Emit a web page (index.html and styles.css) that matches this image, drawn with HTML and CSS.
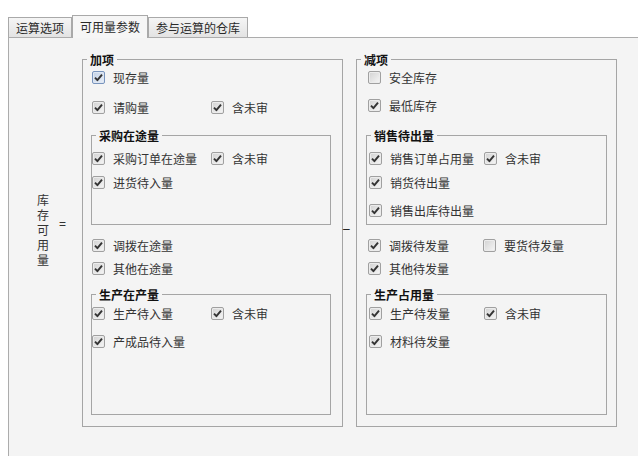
FILE: index.html
```html
<!DOCTYPE html>
<html lang="zh-CN">
<head>
<meta charset="utf-8">
<title>可用量参数</title>
<link rel="stylesheet" href="styles.css">
</head>
<body>
<div class="tabs">
  <div class="tab">运算选项</div>
  <div class="tab active">可用量参数</div>
  <div class="tab">参与运算的仓库</div>
</div>
<div class="panel">
  <div class="formula">
    <div class="vlabel">库存可用量</div>
    <div class="eq">=</div>

    <fieldset class="group add">
      <legend>加项</legend>
      <div class="row"><label class="item"><span class="cb focus"><svg viewBox="0 0 11 11"><path d="M2 5.6 L4.4 8.2 L9 2.6"/></svg></span>现存量</label></div>
      <div class="row mt10"><label class="item wl"><span class="cb"><svg viewBox="0 0 11 11"><path d="M2 5.6 L4.4 8.2 L9 2.6"/></svg></span>请购量</label><label class="item"><span class="cb"><svg viewBox="0 0 11 11"><path d="M2 5.6 L4.4 8.2 L9 2.6"/></svg></span>含未审</label></div>

      <fieldset class="sub sub1 mt11">
        <legend>采购在途量</legend>
        <div class="row mt5"><label class="item wl"><span class="cb"><svg viewBox="0 0 11 11"><path d="M2 5.6 L4.4 8.2 L9 2.6"/></svg></span>采购订单在途量</label><label class="item"><span class="cb"><svg viewBox="0 0 11 11"><path d="M2 5.6 L4.4 8.2 L9 2.6"/></svg></span>含未审</label></div>
        <div class="row mt4"><label class="item"><span class="cb"><svg viewBox="0 0 11 11"><path d="M2 5.6 L4.4 8.2 L9 2.6"/></svg></span>进货待入量</label></div>
      </fieldset>

      <div class="row mt10"><label class="item"><span class="cb"><svg viewBox="0 0 11 11"><path d="M2 5.6 L4.4 8.2 L9 2.6"/></svg></span>调拨在途量</label></div>
      <div class="row mt3"><label class="item"><span class="cb"><svg viewBox="0 0 11 11"><path d="M2 5.6 L4.4 8.2 L9 2.6"/></svg></span>其他在途量</label></div>

      <fieldset class="sub sub2 mt9">
        <legend>生产在产量</legend>
        <div class="row mt1"><label class="item wl"><span class="cb"><svg viewBox="0 0 11 11"><path d="M2 5.6 L4.4 8.2 L9 2.6"/></svg></span>生产待入量</label><label class="item"><span class="cb"><svg viewBox="0 0 11 11"><path d="M2 5.6 L4.4 8.2 L9 2.6"/></svg></span>含未审</label></div>
        <div class="row mt8"><label class="item"><span class="cb"><svg viewBox="0 0 11 11"><path d="M2 5.6 L4.4 8.2 L9 2.6"/></svg></span>产成品待入量</label></div>
      </fieldset>
    </fieldset>

    <div class="minus">–</div>

    <fieldset class="group sub-group">
      <legend>减项</legend>
      <div class="row"><label class="item"><span class="cb"></span>安全库存</label></div>
      <div class="row mt8"><label class="item"><span class="cb"><svg viewBox="0 0 11 11"><path d="M2 5.6 L4.4 8.2 L9 2.6"/></svg></span>最低库存</label></div>

      <fieldset class="sub sub1 mt13">
        <legend>销售待出量</legend>
        <div class="row mt5"><label class="item wr"><span class="cb"><svg viewBox="0 0 11 11"><path d="M2 5.6 L4.4 8.2 L9 2.6"/></svg></span>销售订单占用量</label><label class="item"><span class="cb"><svg viewBox="0 0 11 11"><path d="M2 5.6 L4.4 8.2 L9 2.6"/></svg></span>含未审</label></div>
        <div class="row mt4"><label class="item"><span class="cb"><svg viewBox="0 0 11 11"><path d="M2 5.6 L4.4 8.2 L9 2.6"/></svg></span>销货待出量</label></div>
        <div class="row mt8"><label class="item"><span class="cb"><svg viewBox="0 0 11 11"><path d="M2 5.6 L4.4 8.2 L9 2.6"/></svg></span>销售出库待出量</label></div>
      </fieldset>

      <div class="row mt10"><label class="item wr"><span class="cb"><svg viewBox="0 0 11 11"><path d="M2 5.6 L4.4 8.2 L9 2.6"/></svg></span>调拨待发量</label><label class="item"><span class="cb"></span>要货待发量</label></div>
      <div class="row mt3"><label class="item"><span class="cb"><svg viewBox="0 0 11 11"><path d="M2 5.6 L4.4 8.2 L9 2.6"/></svg></span>其他待发量</label></div>

      <fieldset class="sub sub2 mt9">
        <legend>生产占用量</legend>
        <div class="row mt1"><label class="item wr"><span class="cb"><svg viewBox="0 0 11 11"><path d="M2 5.6 L4.4 8.2 L9 2.6"/></svg></span>生产待发量</label><label class="item"><span class="cb"><svg viewBox="0 0 11 11"><path d="M2 5.6 L4.4 8.2 L9 2.6"/></svg></span>含未审</label></div>
        <div class="row mt8"><label class="item"><span class="cb"><svg viewBox="0 0 11 11"><path d="M2 5.6 L4.4 8.2 L9 2.6"/></svg></span>材料待发量</label></div>
      </fieldset>
    </fieldset>
  </div>
</div>
</body>
</html>
```

FILE: styles.css
```css
html, body {
  margin: 0;
  padding: 0;
  width: 638px;
  height: 456px;
  overflow: hidden;
  background: #ffffff;
}

body {
  font-family: "Noto Sans CJK SC", "Noto Sans", sans-serif;
  font-size: 12px;
  color: #333333;
}

/* ---------- tabs ---------- */
.tabs {
  display: flex;
  align-items: flex-end;
  margin-left: 8px;
  padding-top: 15px;
  height: 22px;
}

.tab {
  height: 19px;
  line-height: 19px;
  padding: 0 7px;
  border: 1px solid #a9a9a9;
  border-bottom: none;
  background: linear-gradient(#f5f5f5, #e3e3e3);
  color: #2a2a2a;
  white-space: nowrap;
}

.tab.active {
  height: 22px;
  line-height: 21px;
  margin-bottom: -1px;
  background: #f6f6f6;
  position: relative;
  z-index: 1;
}

/* ---------- panel ---------- */
.panel {
  margin-left: 8px;
  width: 629px;
  height: 404px;
  padding-top: 14px;
  border: 1px solid #acacac;
  border-right: none;
  border-bottom: none;
  background: #f4f4f4;
}

.formula {
  display: flex;
  align-items: flex-start;
}

.vlabel {
  width: 12px;
  margin-left: 28px;
  margin-top: 140px;
  line-height: 15px;
  word-break: break-all;
}

.eq {
  width: 7px;
  margin-left: 10px;
  margin-top: 165px;
  line-height: 15px;
  font-family: "Liberation Sans", sans-serif;
  font-size: 12px;
}

.minus {
  width: 13px;
  margin-top: 170px;
  line-height: 15px;
  font-family: "Liberation Sans", sans-serif;
  font-size: 12px;
  color: #111111;
}

/* ---------- group boxes ---------- */
fieldset {
  margin: 0;
  padding: 0;
  min-inline-size: 0;
  border: 1px solid #a5a5a5;
}

legend {
  margin-left: 4px;
  padding: 0 3px;
  line-height: 15px;
  font-weight: bold;
  color: #111111;
}

.group {
  width: 259px;
  padding-bottom: 11px;
}

.group.add {
  margin-left: 16px;
}

.group.add > .row {
  padding-left: 9px;
}

.sub-group > .row {
  padding-left: 11px;
}

.sub {
  width: 238px;
}

.add .sub {
  margin-left: 8px;
}

.sub-group .sub {
  width: 239px;
  margin-left: 9px;
}

.sub-group .sub > .row {
  padding-left: 2px;
}

.sub1 {
  padding-bottom: 32px;
}

.sub-group .sub1 {
  padding-bottom: 4px;
}

.sub2 {
  padding-bottom: 63px;
}

/* ---------- rows & checkboxes ---------- */
.row {
  display: flex;
  align-items: center;
  height: 20px;
}

.item {
  display: flex;
  align-items: center;
  white-space: nowrap;
}

.item.wl {
  width: 119px;
}

.item.wr {
  width: 115px;
}

.cb {
  display: inline-flex;
  width: 11px;
  height: 11px;
  margin-right: 8px;
  border: 1px solid #a0a0a0;
  border-radius: 2px;
  background: linear-gradient(135deg, #d2d2d2, #f6f6f6);
  box-shadow: inset 0 0 0 1px #ececec;
  flex: none;
}

.cb.focus {
  border-color: #7894bd;
  background: linear-gradient(135deg, #c2d1e6, #e9eff8);
  box-shadow: inset 0 0 0 1px #dfe7f2;
}

.cb svg {
  width: 11px;
  height: 11px;
  display: block;
}

.cb path {
  fill: none;
  stroke: #333333;
  stroke-width: 1.9;
  stroke-linejoin: round;
}

/* spacing */
.mt1 { margin-top: 1px; }
.mt3 { margin-top: 3px; }
.mt4 { margin-top: 4px; }
.mt5 { margin-top: 5px; }
.mt8 { margin-top: 8px; }
.mt9 { margin-top: 9px; }
.mt10 { margin-top: 10px; }
.mt11 { margin-top: 11px; }
.mt13 { margin-top: 13px; }
```
